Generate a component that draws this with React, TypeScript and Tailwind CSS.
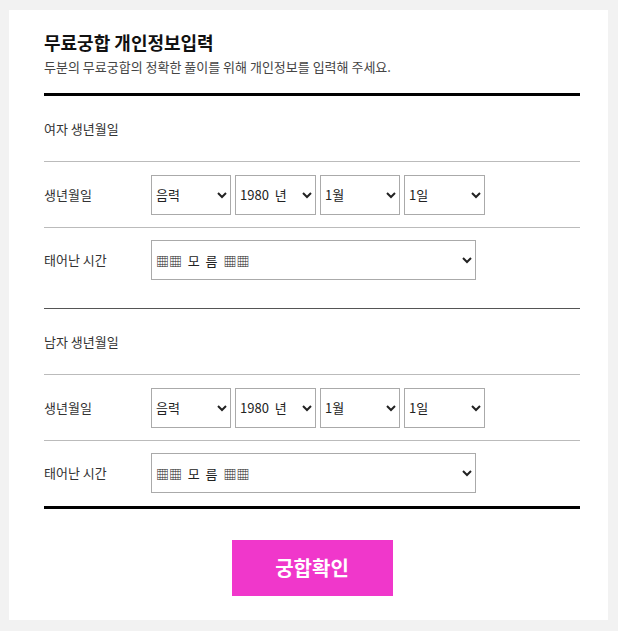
import React from 'react';

const font = { fontFamily: '"Noto Sans CJK KR", "Noto Sans", sans-serif' };

function Sel({ value, options, className }: { value: string; options: string[]; className: string }) {
  return (
    <select
      defaultValue={value}
      className={`h-10 border border-[#aaa] bg-white pl-0 pr-1 text-[13px] text-[#222] ${className}`}
    >
      {options.map((o) => (
        <option key={o}>{o}</option>
      ))}
    </select>
  );
}

const unknown = '▦▦\u00a0\u00a0모\u00a0\u00a0름\u00a0\u00a0▦▦';

function DateRow() {
  return (
    <div className="flex items-center h-[66px] border-b border-[#bbb]">
      <div className="w-[107px] text-[13px] text-[#333]">생년월일</div>
      <div className="flex gap-1">
        <Sel value="음력" options={['음력', '양력']} className="w-20" />
        <Sel value={'1980\u00a0\u00a0년'} options={['1979\u00a0\u00a0년', '1980\u00a0\u00a0년', '1981\u00a0\u00a0년']} className="w-[81px]" />
        <Sel value="1월" options={['1월', '2월', '3월']} className="w-20" />
        <Sel value="1일" options={['1일', '2일', '3일']} className="w-[81px]" />
      </div>
    </div>
  );
}

function TimeRow({ last }: { last?: boolean }) {
  return (
    <div className={`flex pt-3 ${last ? 'pb-[13px]' : 'pb-7'}`}>
      <div className="w-[107px] h-10 flex items-center text-[13px] text-[#333]">태어난 시간</div>
      <Sel value={unknown} options={[unknown, '자시', '축시']} className="w-[325px]" />
    </div>
  );
}

function Section({ title, last }: { title: string; last?: boolean }) {
  return (
    <div className={last ? '' : 'border-b border-[#555]'}>
      <div className="h-[66px] flex items-center text-[13px] text-[#333] border-b border-[#bbb]">{title}</div>
      <DateRow />
      <TimeRow last={last} />
    </div>
  );
}

export default function App() {
  return (
    <div className="min-h-[631px] bg-[#f2f2f2] pt-[10px] pl-[9px] pr-[10px] pb-[11px]" style={font}>
      <div className="bg-white pl-[35px] pr-[28px] pt-5 pb-6">
        <h1 className="text-[18px] font-bold text-[#111] leading-6">무료궁합 개인정보입력</h1>
        <p className="mt-[3px] text-[13px] text-[#444] leading-5">두분의 무료궁합의 정확한 풀이를 위해 개인정보를 입력해 주세요.</p>
        <div className="mt-4 border-t-[3px] border-black">
          <Section title="여자 생년월일" />
          <Section title="남자 생년월일" last />
        </div>
        <div className="border-t-[3px] border-black" />
        <div className="flex justify-center mt-[31px]">
          <button className="w-[161px] h-14 bg-[#f037cb] text-white text-[20px] font-bold">궁합확인</button>
        </div>
      </div>
    </div>
  );
}
